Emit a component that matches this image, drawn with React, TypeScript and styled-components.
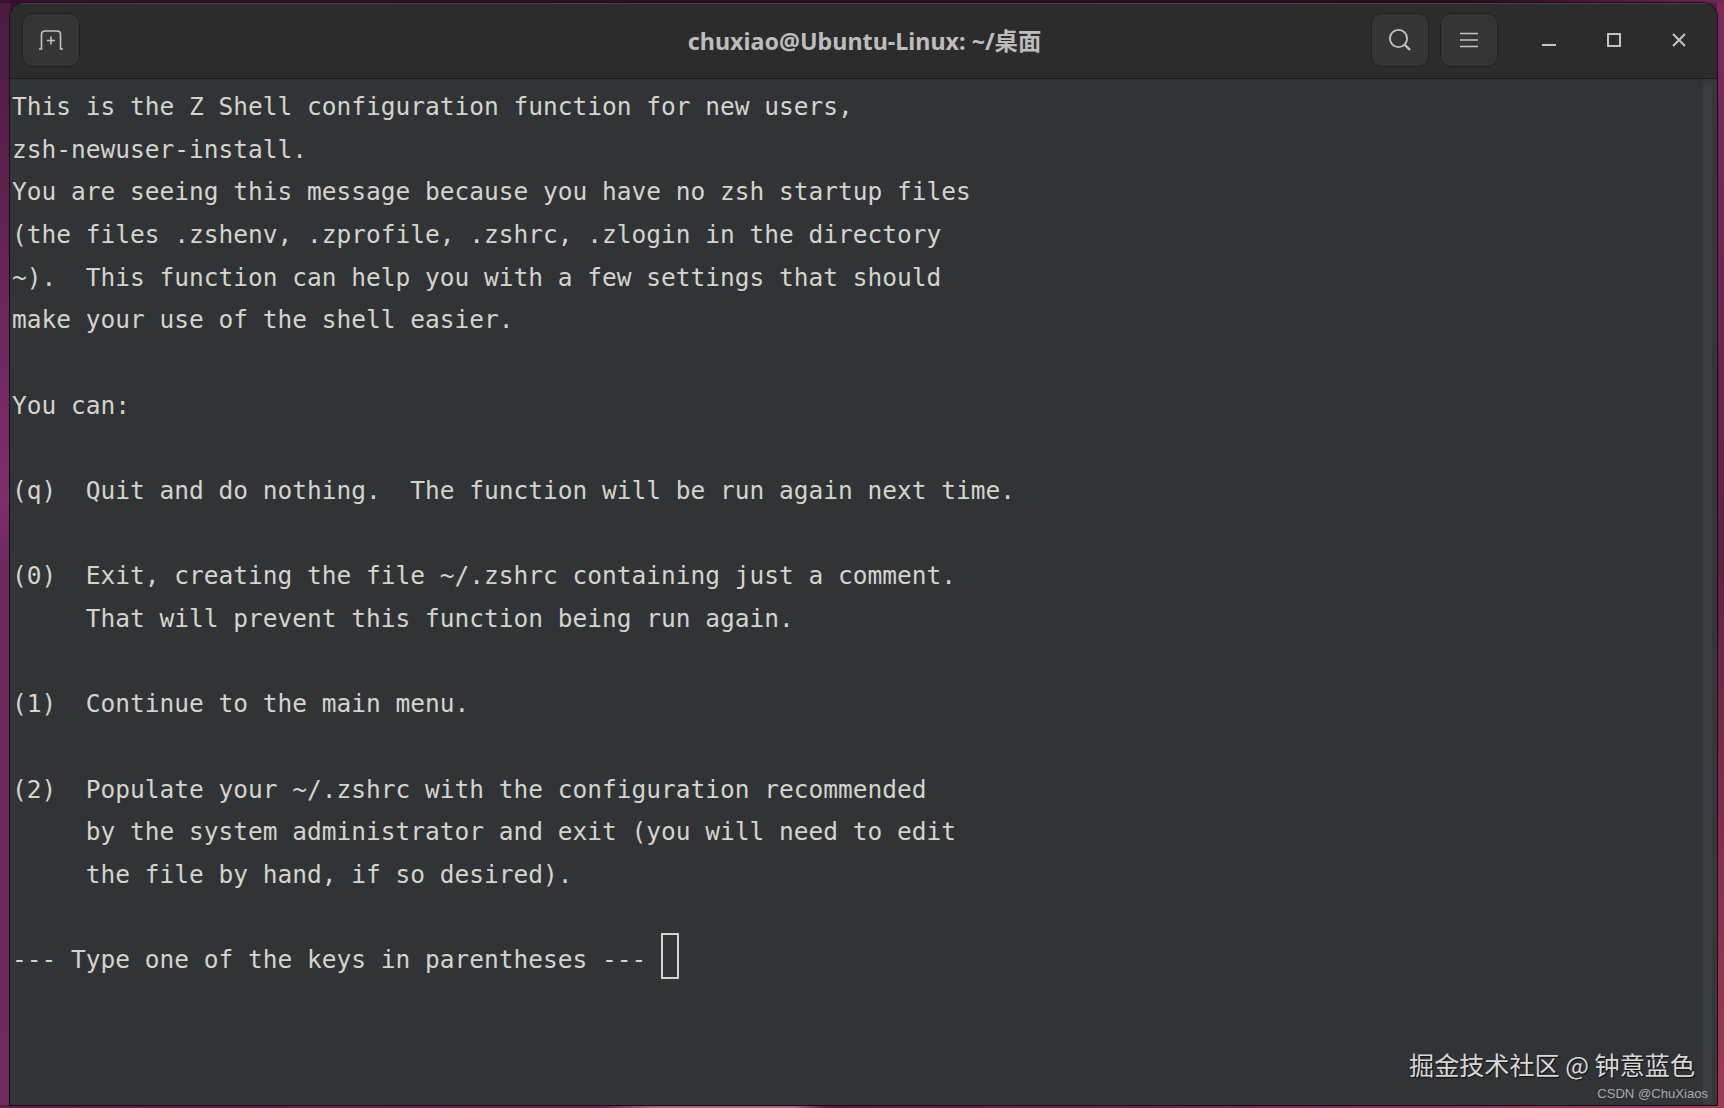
import styled, { createGlobalStyle } from 'styled-components';

const GlobalStyle = createGlobalStyle`
  html, body {
    margin: 0;
    padding: 0;
    height: 100%;
  }
  #root {
    height: 100%;
  }
`;

const Desktop = styled.div`
  box-sizing: border-box;
  width: 1724px;
  height: 1108px;
  padding: 3px 7px 3px 10px;
  overflow: hidden;
  background:
    linear-gradient(90deg, #3a0e2e 0%, #2e0a24 50%, #2a0820 85%, #6e2656 100%) top / 100% 3px no-repeat,
    linear-gradient(90deg, #5c1e48 0%, #6a2450 35%, #a8647e 38%, #a8647e 46%, #5a1c42 48%, #7a2a58 75%, #a23c56 100%) bottom / 100% 3px no-repeat,
    linear-gradient(180deg, #4c1a3c 0%, #7e2e68 45%, #6a2858 52%, #702a58 100%) left / 10px 100% no-repeat,
    linear-gradient(180deg, #7a2a5c 0%, #5e2048 50%, #a03a55 100%) right / 7px 100% no-repeat,
    linear-gradient(90deg, #3e1230 0%, #5a1c42 100%);
`;

const Window = styled.div`
  position: relative;
  display: flex;
  flex-direction: column;
  height: 100%;
  border-radius: 14px 14px 0 0;
  overflow: hidden;
  background: #303437;
  box-shadow: 0 0 0 1px #1d0c18;
`;

const HeaderBar = styled.header`
  flex: none;
  display: grid;
  grid-template-columns: 1fr auto 1fr;
  align-items: center;
  box-sizing: border-box;
  height: 76px;
  padding: 0 6px 2px 12px;
  background: #2c2c2c;
  border-bottom: 1px solid #1c1c1c;
  box-shadow: inset 0 1px #454545;
`;

const HeaderSide = styled.div<{ $end?: boolean }>`
  display: flex;
  align-items: center;
  justify-content: ${({ $end }) => ($end ? 'flex-end' : 'flex-start')};
`;

const Title = styled.div`
  margin-left: -4px;
  font-family: 'Noto Sans', 'Noto Sans CJK SC', sans-serif;
  font-size: 23.3px;
  font-weight: 700;
  color: #bdbdbd;
  white-space: nowrap;
`;

const HeaderButton = styled.div<{ $gap?: number }>`
  flex: none;
  display: flex;
  align-items: center;
  justify-content: center;
  box-sizing: border-box;
  width: 58px;
  height: 54px;
  margin-right: ${({ $gap }) => $gap ?? 0}px;
  border-radius: 11px;
  background: #353535;
  border: 1px solid #232323;
`;

const WindowControl = styled.div`
  flex: none;
  display: flex;
  align-items: center;
  justify-content: center;
  width: 65px;
  height: 54px;
`;

const Controls = styled.div`
  display: flex;
  margin-left: 18px;
`;

const Body = styled.div`
  flex: 1;
  display: flex;
  min-height: 0;
`;

const Terminal = styled.pre`
  flex: 1;
  margin: 0;
  padding: 7px 0 0 2px;
  font-family: 'DejaVu Sans Mono', monospace;
  font-size: 24.5px;
  line-height: 42.65px;
  color: #d4d4cc;
`;

const Cursor = styled.span`
  display: inline-block;
  box-sizing: border-box;
  width: 18px;
  height: 46px;
  margin: -10px 0;
  vertical-align: -1px;
  border: 2px solid #d4d4cc;
`;

const ScrollTrack = styled.div`
  flex: none;
  width: 14px;
  background: #34383b;
`;

const ScrollThumb = styled.div`
  width: 9px;
  height: 1020px;
  margin-top: 5px;
  border-radius: 5px;
  background: #3a3e41;
`;

const Watermark = styled.div`
  position: absolute;
  right: 22px;
  bottom: 26px;
  font-family: 'Noto Sans CJK SC', 'Noto Sans', sans-serif;
  font-size: 25.1px;
  line-height: 30px;
  color: #d8d8d8;
  text-shadow: 1px 1px 1px #111;
  white-space: pre;
`;

const Credit = styled.div`
  position: absolute;
  right: 9px;
  bottom: 2px;
  font-family: 'Liberation Sans', sans-serif;
  font-size: 13.1px;
  line-height: 18px;
  color: #a8aaac;
`;

const text = `This is the Z Shell configuration function for new users,
zsh-newuser-install.
You are seeing this message because you have no zsh startup files
(the files .zshenv, .zprofile, .zshrc, .zlogin in the directory
~).  This function can help you with a few settings that should
make your use of the shell easier.

You can:

(q)  Quit and do nothing.  The function will be run again next time.

(0)  Exit, creating the file ~/.zshrc containing just a comment.
     That will prevent this function being run again.

(1)  Continue to the main menu.

(2)  Populate your ~/.zshrc with the configuration recommended
     by the system administrator and exit (you will need to edit
     the file by hand, if so desired).

--- Type one of the keys in parentheses --- `;

const iconStroke = '#c4c4c4';

function NewTabIcon() {
  return (
    <svg width="26" height="22" viewBox="0 0 26 22" fill="none" stroke={iconStroke} strokeWidth="1.6">
      <path d="M1 20h2.500V5.500Q3.500 2 7 2h12q3.500 0 3.500 3.500V20H25" />
      <path d="M13 7.500v8M9 11.500h8" />
    </svg>
  );
}

function SearchIcon() {
  return (
    <svg width="24" height="24" viewBox="0 0 24 24" fill="none" stroke={iconStroke} strokeWidth="1.8">
      <circle cx="10.500" cy="10.500" r="8.600" />
      <path d="M17 17l5 5" strokeWidth="2.400" />
    </svg>
  );
}

function MenuIcon() {
  return (
    <svg width="18" height="16" viewBox="0 0 18 16" fill="none" stroke={iconStroke} strokeWidth="1.7">
      <path d="M0 1.500h18M0 8h18M0 14.500h18" />
    </svg>
  );
}

function MinimizeIcon() {
  return (
    <svg width="14" height="14" viewBox="0 0 14 14" fill="none" stroke={iconStroke} strokeWidth="2">
      <path d="M0 12h14" />
    </svg>
  );
}

function MaximizeIcon() {
  return (
    <svg width="14" height="14" viewBox="0 0 14 14" fill="none" stroke={iconStroke} strokeWidth="2">
      <rect x="1" y="1" width="12" height="12" />
    </svg>
  );
}

function CloseIcon() {
  return (
    <svg width="14" height="14" viewBox="0 0 14 14" fill="none" stroke={iconStroke} strokeWidth="2">
      <path d="M1 1l12 12M13 1L1 13" />
    </svg>
  );
}

export default function App() {
  return (
    <Desktop>
      <GlobalStyle />
      <Window>
        <HeaderBar>
          <HeaderSide>
            <HeaderButton>
              <NewTabIcon />
            </HeaderButton>
          </HeaderSide>
          <Title>chuxiao@Ubuntu-Linux: ~/桌面</Title>
          <HeaderSide $end>
            <HeaderButton $gap={11}>
              <SearchIcon />
            </HeaderButton>
            <HeaderButton>
              <MenuIcon />
            </HeaderButton>
            <Controls>
              <WindowControl>
                <MinimizeIcon />
              </WindowControl>
              <WindowControl>
                <MaximizeIcon />
              </WindowControl>
              <WindowControl>
                <CloseIcon />
              </WindowControl>
            </Controls>
          </HeaderSide>
        </HeaderBar>
        <Body>
          <Terminal>
            {text}
            <Cursor />
          </Terminal>
          <ScrollTrack>
            <ScrollThumb />
          </ScrollTrack>
        </Body>
        <Watermark>掘金技术社区 @ 钟意蓝色</Watermark>
        <Credit>CSDN @ChuXiaos</Credit>
      </Window>
    </Desktop>
  );
}
